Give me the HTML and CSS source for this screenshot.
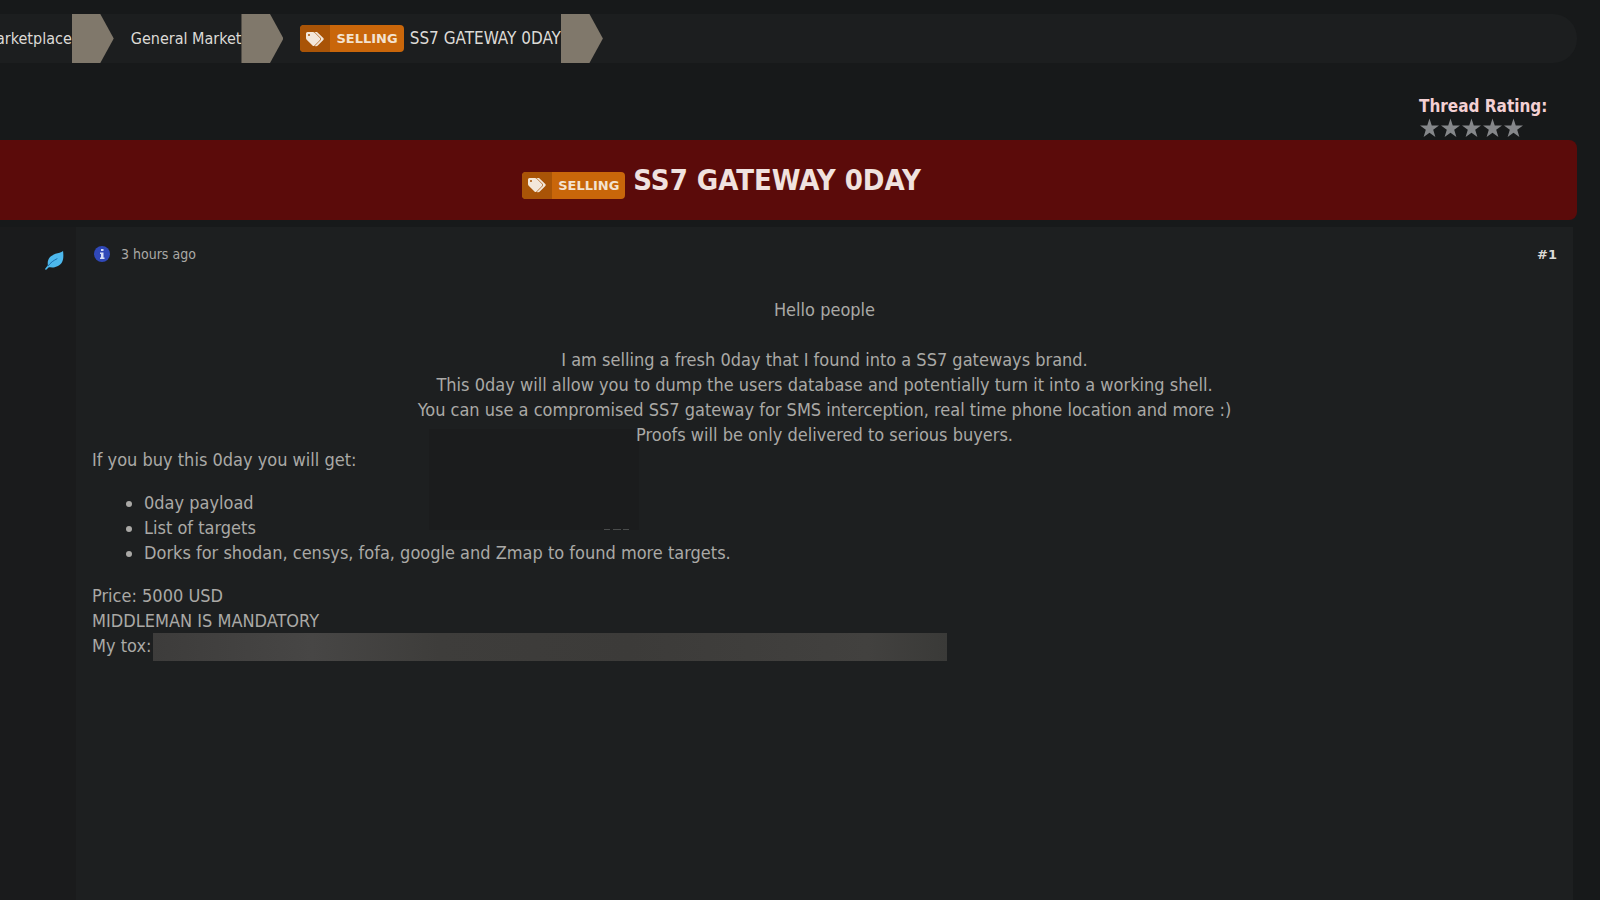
FILE: index.html
```html
<!DOCTYPE html>
<html lang="en">
<head>
    <meta charset="UTF-8">
    <meta name="viewport" content="width=device-width, initial-scale=1.0">
    <title>SS7 GATEWAY 0DAY</title>
    <link rel="stylesheet" href="styles.css">
</head>
<body>
    <svg class="sprite" width="0" height="0" aria-hidden="true">
        <symbol id="tags" viewBox="0 0 20 16">
            <path d="M1 2.5 Q1 1 2.5 1 H8 Q9 1 9.7 1.7 L15 7 Q16 8 15 9 L9.5 14.5 Q8.5 15.5 7.5 14.5 L1.7 8.7 Q1 8 1 7 Z M4 3 A1 1 0 1 0 4 5 A1 1 0 1 0 4 3 Z" fill-rule="evenodd"/>
            <path d="M9.6 1 H12 L18.3 7 Q19.3 8 18.3 9 L12.8 14.5 Q11.8 15.5 9.8 14.9 L15.7 9 Q16.5 8 15.7 7 Z"/>
        </symbol>
        <symbol id="star" viewBox="0 0 20 20">
            <path d="M10 0 L12.4 7.3 H20 L13.9 11.8 L16.2 19.5 L10 15 L3.8 19.5 L6.1 11.8 L0 7.3 H7.6 Z"/>
        </symbol>
    </svg>

    <nav class="breadcrumb" aria-label="Breadcrumb">
        <a class="crumb" href="#">arketplace</a>
        <a class="crumb" href="#">General Market</a>
        <a class="crumb current" href="#">
            <span class="prefix"><span class="prefix-icon"><svg><use href="#tags"/></svg></span><span class="prefix-text">SELLING</span></span>
            SS7 GATEWAY 0DAY
        </a>
    </nav>

    <div class="rating">
        <strong>Thread Rating:</strong>
        <div class="stars">
            <svg><use href="#star"/></svg>
            <svg><use href="#star"/></svg>
            <svg><use href="#star"/></svg>
            <svg><use href="#star"/></svg>
            <svg><use href="#star"/></svg>
        </div>
    </div>

    <header class="thread-head">
        <span class="prefix"><span class="prefix-icon"><svg><use href="#tags"/></svg></span><span class="prefix-text">SELLING</span></span>
        <h1>SS7 GATEWAY 0DAY</h1>
    </header>

    <main class="post">
        <aside class="author">
            <svg class="leaf" viewBox="0 0 20 20">
                <path d="M19 0 C20 8 19 14 13 16 C9 18 6 17 4 17 L1 20 L0 19 L3 15 C2 8 6 5 11 3 C14 2 17 2 19 0 Z" fill="#4db8ec"/>
                <path d="M3 16 C6 12 9 10 13 8" fill="none" stroke="#1767a8" stroke-width="1"/>
            </svg>
        </aside>
        <article class="post-main">
            <div class="post-head">
                <svg class="info" viewBox="0 0 16 16">
                    <circle cx="8" cy="8" r="8" fill="#3048b8"/>
                    <path d="M7 3 H9.5 V5 H7 Z M6 6.5 H9.5 V11.5 H10.5 V13 H6 V11.5 H7 V8 H6 Z" fill="#d5dcf5"/>
                </svg>
                <span class="date">3 hours ago</span>
                <a class="number" href="#">#1</a>
            </div>
            <div class="post-body">
                <div class="intro">
                    Hello people<br>
                    <br>
                    I am selling a fresh 0day that I found into a SS7 gateways brand.<br>
                    This 0day will allow you to dump the users database and potentially turn it into a working shell.<br>
                    You can use a compromised SS7 gateway for SMS interception, real time phone location and more :)<br>
                    Proofs will be only delivered to serious buyers.
                </div>
                <div class="offer">
                    If you buy this 0day you will get:
                    <ul>
                        <li>0day payload</li>
                        <li>List of targets</li>
                        <li>Dorks for shodan, censys, fofa, google and Zmap to found more targets.</li>
                    </ul>
                    <div class="patch"></div>
                </div>
                Price: 5000 USD<br>
                MIDDLEMAN IS MANDATORY
                <div class="tox">My tox:<span class="hidden-id"></span></div>
            </div>
        </article>
    </main>
</body>
</html>
```
FILE: styles.css
```css
* {
    box-sizing: border-box;
}
body {
    margin: 0;
    min-height: 100vh;
    display: flex;
    flex-direction: column;
    padding: 14px 23px 0 0;
    overflow-x: hidden;
    background-color: #17191a;
    color: #aaa9a6;
    font-family: "DejaVu Sans Condensed", "DejaVu Sans", Tahoma, sans-serif;
    font-stretch: condensed;
    font-size: 18px;
    line-height: 25px;
}
a {
    color: #dcdad6;
    text-decoration: none;
}
.sprite {
    position: absolute;
}
.breadcrumb {
    display: flex;
    gap: 17px;
    height: 49px;
    margin-left: -4px;
    background-color: #1c1e1f;
    border-radius: 0 24px 24px 0;
    font-size: 16px;
}
.crumb {
    display: flex;
    align-items: center;
    gap: 6px;
    white-space: nowrap;
}
.current {
    font-size: 17px;
}
.crumb::after {
    content: "";
    width: 42px;
    height: 49px;
    margin-left: -6px;
    background-color: #80786b;
    clip-path: polygon(0 0, 68% 0, 100% 50%, 68% 100%, 0 100%);
}
.prefix {
    display: flex;
    height: 27px;
    border-radius: 4px;
    overflow: hidden;
    background-color: #c9660a;
    color: #f3e2d0;
    font-family: "DejaVu Sans", Verdana, sans-serif;
    font-stretch: normal;
    font-size: 13px;
    font-weight: bold;
    line-height: 27px;
}
.prefix-icon {
    display: flex;
    align-items: center;
    justify-content: center;
    width: 30px;
    background-color: #a95407;
}
.prefix-icon svg {
    width: 20px;
    height: 16px;
    fill: #f3e7da;
}
.prefix-text {
    padding: 0 6px;
}
.rating {
    align-self: flex-end;
    width: 158px;
    padding-top: 31px;
    color: #f3d0d3;
    font-size: 17px;
    line-height: 24px;
}
.stars {
    display: flex;
    gap: 2px;
    padding-left: 1px;
    height: 22px;
}
.stars svg {
    width: 19px;
    height: 20px;
    fill: #85878a;
}
.thread-head {
    display: flex;
    align-items: center;
    justify-content: center;
    gap: 8px;
    height: 80px;
    padding-right: 134px;
    background-color: #5b0b0a;
    border-radius: 0 8px 8px 0;
}
.thread-head .prefix {
    margin-top: 10px;
}
.thread-head h1 {
    margin: 0;
    color: #f0e2df;
    font-size: 29px;
    line-height: 40px;
}
.post {
    flex: 1;
    display: flex;
    padding: 7px 4px 0 0;
}
.author {
    width: 76px;
    padding: 24px 12px 0 0;
    text-align: right;
    background-color: #1a1b1c;
}
.leaf {
    width: 19px;
    height: 19px;
}
.post-main {
    flex: 1;
    padding: 14px 16px;
    background-color: #1d1f20;
}
.post-head {
    display: flex;
    align-items: center;
    height: 26px;
    padding: 0 0 0 2px;
    font-size: 14px;
}
.info {
    width: 16px;
    height: 16px;
    margin-right: 11px;
}
.number {
    margin-left: auto;
    font-family: "DejaVu Sans", Verdana, sans-serif;
    font-stretch: normal;
    font-size: 13px;
    font-weight: bold;
}
.post-body {
    padding-top: 30px;
}
.intro {
    position: relative;
    z-index: 1;
    text-align: center;
}
.offer {
    position: relative;
}
.offer ul {
    margin: 18px 0;
    padding-left: 52px;
}
/* covers the attachment next to the list */
.patch {
    position: absolute;
    left: 337px;
    top: -18px;
    width: 210px;
    height: 101px;
    background: linear-gradient(90deg, #4a4c4c 6px, transparent 6px 9px, #4a4c4c 9px 17px, transparent 17px 19px, #4a4c4c 19px) 175px 100% / 25px 1px no-repeat, #1b1c1d;
}
.tox {
    display: flex;
    gap: 2px;
}
.hidden-id {
    width: 794px;
    height: 28px;
    background: linear-gradient(90deg, #3d3c3b, #474645 20%, #3e3d3b 36%, #3c3b39 60%, #42413f 90%, #3a3a38);
}
```
